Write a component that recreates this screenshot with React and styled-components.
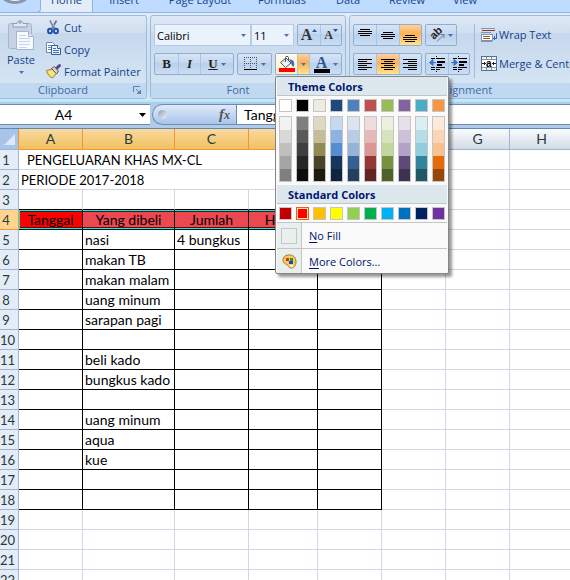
import React from 'react'
import styled, { createGlobalStyle } from 'styled-components';

const GlobalStyle = createGlobalStyle`
*{
    box-sizing:border-box;
}
body{
    margin:0;
    overflow:hidden;
    background:#fff;
}
button, input, select{
    font:inherit;
    color:inherit;
    margin:0;
    padding:0;
    border:0;
    border-radius:0;
    background:none;
    outline:0;
}
`;

const tabs = [
    { name: 'Home', width: 52, active: true },
    { name: 'Insert', width: 62 },
    { name: 'Page Layout', width: 90 },
    { name: 'Formulas', width: 74 },
    { name: 'Data', width: 58 },
    { name: 'Review', width: 60 },
    { name: 'View', width: 56 },
];

const themeColors = [
    { base: '#ffffff', shades: ['#f2f2f2', '#d8d8d8', '#bfbfbf', '#a5a5a5', '#7f7f7f'] },
    { base: '#000000', shades: ['#7f7f7f', '#595959', '#3f3f3f', '#262626', '#0c0c0c'] },
    { base: '#eeece1', shades: ['#ddd9c3', '#c4bd97', '#938953', '#494429', '#1d1b10'] },
    { base: '#1f497d', shades: ['#c6d9f0', '#8db3e2', '#548dd4', '#17365d', '#0f243e'] },
    { base: '#4f81bd', shades: ['#dbe5f1', '#b8cce4', '#95b3d7', '#366092', '#244061'] },
    { base: '#c0504d', shades: ['#f2dcdb', '#e5b9b7', '#d99694', '#953734', '#632423'] },
    { base: '#9bbb59', shades: ['#ebf1dd', '#d7e3bc', '#c3d69b', '#76923c', '#4f6128'] },
    { base: '#8064a2', shades: ['#e5e0ec', '#ccc1d9', '#b2a2c7', '#5f497a', '#3f3151'] },
    { base: '#4bacc6', shades: ['#dbeef3', '#b7dde8', '#92cddc', '#31859b', '#205867'] },
    { base: '#f79646', shades: ['#fdeada', '#fbd5b5', '#fac08f', '#e36c09', '#974806'] },
];

const standardColors = ['#c00000', '#ff0000', '#ffc000', '#ffff00', '#92d050', '#00b050', '#00b0f0', '#0070c0', '#002060', '#7030a0'];

const columns = [
    { name: 'A', width: 64, selected: true },
    { name: 'B', width: 92, selected: true },
    { name: 'C', width: 74, selected: true },
    { name: 'D', width: 69, selected: true },
    { name: 'E', width: 64, selected: true },
    { name: 'F', width: 64 },
    { name: 'G', width: 64 },
    { name: 'H', width: 64 },
    { name: 'I', width: 64 },
    { name: 'J', width: 64 },
];

const headings = ['Tanggal', 'Yang dibeli', 'Jumlah', 'Harga', 'Total'];

const items = {
    5: ['', 'nasi', '4 bungkus'],
    6: ['', 'makan TB'],
    7: ['', 'makan malam'],
    8: ['', 'uang minum'],
    9: ['', 'sarapan pagi'],
    11: ['', 'beli kado'],
    12: ['', 'bungkus kado'],
    14: ['', 'uang minum'],
    15: ['', 'aqua'],
    16: ['', 'kue'],
};

const Arrow = () => (
    <svg width='5' height='3' viewBox='0 0 5 3'><path d='M0 0h5L2.5 3z' fill='#4a73ad' /></svg>
);

const PasteIcon = () => (
    <svg width='28' height='32' viewBox='0 0 28 32'>
        <rect x='1.5' y='4.500' width='23' height='25' rx='2' fill='#c6d3e6' stroke='#a6b6ce' />
        <path d='M6 8V4.500h4C10 1 16 1 16 4.500h4V8z' fill='#e3e7ee' stroke='#8f9db3' />
        <circle cx='13' cy='3.500' r='1.200' fill='#8f9db3' />
        <path d='M9.500 12.500h12l5 5v13h-17z' fill='#f6f9fe' stroke='#a3b5d0' />
        <path d='M21.500 12.500v5h5' fill='#dbe5f3' stroke='#a3b5d0' />
        <path d='M12 16.500h7M12 19.500h11M12 22.500h11M12 25.500h11M12 28.500h8' stroke='#c9d6e9' />
    </svg>
);

const CutIcon = () => (
    <svg width='16' height='16' viewBox='0 0 16 16'>
        <path d='M4 1.500l4.500 8M10.500 1.500l-4.500 8' stroke='#6b7b93' strokeWidth='1.800' fill='none' />
        <path d='M5 2l3.500 6' stroke='#dbe3ee' strokeWidth='.7' />
        <ellipse cx='4' cy='12' rx='2' ry='2.300' fill='none' stroke='#1f4fb5' strokeWidth='1.900' />
        <ellipse cx='10' cy='12' rx='2' ry='2.300' fill='none' stroke='#1f4fb5' strokeWidth='1.900' />
    </svg>
);

const CopyIcon = () => (
    <svg width='16' height='16' viewBox='0 0 16 16'>
        <path d='M.5 1.500h6l3 3v7h-9z' fill='#fff' stroke='#7286a8' />
        <path d='M2 4.500h4M2 6.500h5M2 8.500h5' stroke='#5d86cc' />
        <path d='M5.500 4.500h6l3 3v6h-9z' fill='#e8f0fc' stroke='#3f5a91' />
        <path d='M11.500 4.500v3h3' fill='#fff' stroke='#3f5a91' />
        <path d='M7 7.500h3M7 9.500h6M7 11.500h6' stroke='#3d70c8' />
    </svg>
);

const PainterIcon = () => (
    <svg width='16' height='16' viewBox='0 0 16 16'>
        <path d='M.5 7.500l6-1.500 4 4.500-4 4.500c-3-1-5-3.500-6-7.500z' fill='#f6d965' stroke='#a38532' />
        <path d='M3 8.500l4 4M5 7.500l3.500 3.500' stroke='#fff4bd' />
        <path d='M5.500 5.500l3-2 4 4.500-2 3z' fill='#d5d2c8' stroke='#5d5d6b' />
        <path d='M11 5l2.500-2.500' stroke='#5b4790' strokeWidth='3' strokeLinecap='round' />
    </svg>
);

// letter with a small triangle for grow / shrink font
const GrowIcon = ({ small }) => (
    <LetterIcon $size={small ? 12 : 16}>
        A
        <svg width='5' height='3' viewBox='0 0 5 3'>
            <path d={small ? 'M0 0h5L2.5 3z' : 'M0 3h5L2.500 0z'} fill='#2d5594' />
        </svg>
    </LetterIcon>
);

const BordersIcon = () => (
    <svg width='14' height='14' viewBox='0 0 14 14' shapeRendering='crispEdges'>
        <path d='M0 .5h13M0 6.500h13' stroke='#555' strokeDasharray='1 1' />
        <path d='M.5 0v12M6.500 0v12M12.500 0v12' stroke='#555' strokeDasharray='1 1' />
        <path d='M0 12.500h13' stroke='#000' />
    </svg>
);

const BucketIcon = () => (
    <svg width='18' height='16' viewBox='0 0 18 16'>
        <path d='M2.500 6.500l5.500-4.500 5 5-5.500 4.500z' fill='#f2f4f8' stroke='#44536e' />
        <path d='M4.500 7l3.500-3 3.500 3' fill='none' stroke='#c1cbdb' />
        <path d='M7.500 6V1.500c0-1.500 3-1.500 3 0V5' fill='none' stroke='#44536e' />
        <path d='M11 3.500c4-.5 6 2 5 7-2 .5-2.500-2-3-4z' fill='#3e6dc0' />
        <rect y='12' x='1' width='16' height='4' fill='#ff0000' />
    </svg>
);

const FontColorIcon = () => (
    <FontColorStyled>
        <span>A</span>
        <i />
    </FontColorStyled>
);

const LinesIcon = ({ lines }) => (
    <svg width='15' height='13' viewBox='0 0 15 13' shapeRendering='crispEdges'>
        {lines.map(([x, y, w]) => <rect key={y} x={x} y={y} width={w} height='1' fill='#000' />)}
    </svg>
);

const topLines = [[2, 0, 10], [0, 2, 14], [0, 4, 14], [2, 6, 10]];
const middleLines = topLines.map(([x, y, w]) => [x, y + 3, w]);
const bottomLines = topLines.map(([x, y, w]) => [x, y + 6, w]);
const leftLines = [[0, 1, 14], [0, 3, 9], [0, 5, 14], [0, 7, 9], [0, 9, 14], [0, 11, 9]];
const centerLines = leftLines.map(([, y, w]) => [w === 9 ? 3 : 0, y, w]);
const rightLines = leftLines.map(([, y, w]) => [14 - w, y, w]);

const AngleIcon = () => (
    <svg width='16' height='14' viewBox='0 0 16 14'>
        <text x='0' y='0' transform='translate(5 12) rotate(-45)' fontFamily='Liberation Sans' fontWeight='bold' fontSize='11' fill='#222'>ab</text>
        <path d='M8 13.500L15 6.500M11.500 6.500H15v3.500' fill='none' stroke='#7a7f88' />
    </svg>
);

const IndentIcon = ({ right }) => (
    <svg width='17' height='16' viewBox='0 0 17 16'>
        <path d={right ? 'M0 6.500h5M3 3.500l3.500 3L3 9.500z' : 'M2 6.500h5M4 3.500L.5 6.500l3.500 3z'} fill='#3a6fd0' stroke='#3a6fd0' />
        <g shapeRendering='crispEdges' fill='#000'>
            <rect x='7' y='0' width='1' height='1' />
            <rect x='2' y='2' width='4' height='1' />
            <rect x='7' y='2' width='9' height='1' />
            <rect x='8' y='5' width='8' height='2' />
            <rect x='8' y='8' width='5' height='2' />
            <rect x='2' y='11' width='4' height='1' />
            <rect x='7' y='11' width='9' height='1' />
            <rect x='2' y='13' width='4' height='1' />
            <rect x='7' y='13' width='4' height='1' />
            <rect x='7' y='15' width='1' height='1' />
        </g>
    </svg>
);

const WrapIcon = () => (
    <svg width='16' height='16' viewBox='0 0 16 16' shapeRendering='crispEdges'>
        <path d='M0 1.500h14M0 5.500h10M0 9.500h10M0 14.500h11' stroke='#7d93b5' />
        <path d='M1 3.500h13' stroke='#8a3f14' strokeWidth='1' />
        <rect x='0' y='7' width='11' height='6' fill='#fff' stroke='#7d93b5' />
        <path d='M2 9.500h7M2 11.500h7' stroke='#a5541f' />
        <path d='M15.500 6v5H12M13.500 9v4' stroke='#3a66a8' fill='none' />
    </svg>
);

const MergeIcon = () => (
    <svg width='16' height='16' viewBox='0 0 16 16' shapeRendering='crispEdges'>
        <rect x='.5' y='.5' width='15' height='14' fill='#eef3fa' stroke='#5b6f8f' />
        <path d='M5.500 1v3M10.500 1v3M5.500 11v3M10.500 11v3M1 3.500h14M1 11.500h14' stroke='#7f93b2' />
        <rect x='1' y='4' width='14' height='7' fill='#fff' />
        <path d='M1 7.500h4M3.500 6v3M11 7.500h4M12.500 6v3' stroke='#222' />
        <text x='5' y='11' fontFamily='Liberation Sans' fontWeight='bold' fontSize='10' fill='#000'>a</text>
    </svg>
);

const LauncherIcon = () => (
    <svg width='9' height='9' viewBox='0 0 9 9'>
        <path d='M.5 6V.5H7' fill='none' stroke='#5f7fae' />
        <path d='M3 3l4 4' stroke='#5f7fae' />
        <path d='M8 3.500V8H3.500z' fill='#5f7fae' />
    </svg>
);

const PaletteIcon = () => (
    <svg width='15' height='15' viewBox='0 0 15 15'>
        <path d='M6 1c5-.5 8 2 8 7 0 4-2.500 6-5 6-2 0-2-1.500-3-2.500C4 9.500 1 10 1 6c0-3 2-4.700 5-5z' fill='#f3cf62' stroke='#a77b22' />
        <rect x='4' y='4' width='3' height='3' fill='#d22d1f' />
        <rect x='8' y='4' width='3' height='3' fill='#2f9a35' />
        <rect x='7' y='7' width='4' height='3' fill='#2146b8' />
        <circle cx='9.500' cy='12' r='1.300' fill='#fff' />
    </svg>
);

const ColorPicker = () => {
    return (
        <PickerStyled>
            <PickerTitle>Theme Colors</PickerTitle>
            <SwatchRow>
                {themeColors.map(({ base }) => <Swatch key={base} $color={base} aria-label={base} />)}
            </SwatchRow>
            <SwatchRow $shades>
                {themeColors.map(({ base, shades }) => (
                    <ShadeColumn key={base}>
                        {shades.map(shade => <Shade key={shade} $color={shade} aria-label={shade} />)}
                    </ShadeColumn>
                ))}
            </SwatchRow>
            <PickerTitle>Standard Colors</PickerTitle>
            <SwatchRow $standard>
                {standardColors.map(color => (
                    <Swatch key={color} $color={color} $selected={color === '#ff0000'} aria-label={color} />
                ))}
            </SwatchRow>
            <PickerItem>
                <span className='icon'><i className='empty' /></span>
                <span><u>N</u>o Fill</span>
            </PickerItem>
            <PickerItem>
                <span className='icon'><PaletteIcon /></span>
                <span><u>M</u>ore Colors...</span>
            </PickerItem>
        </PickerStyled>
    )
}

const Ribbon = () => {
    return (
        <RibbonStyled>
            <Group $width={147} $first>
                <div className='body clipboard'>
                    <PasteButton>
                        <PasteIcon />
                        <span>Paste</span>
                        <Arrow />
                    </PasteButton>
                    <div>
                        <TextButton><CutIcon />Cut</TextButton>
                        <TextButton><CopyIcon />Copy</TextButton>
                        <TextButton><PainterIcon />Format Painter</TextButton>
                    </div>
                </div>
                <GroupLabel>
                    <span>Clipboard</span>
                    <button aria-label='Clipboard options'><LauncherIcon /></button>
                </GroupLabel>
            </Group>
            <Group $width={196}>
                <div className='body'>
                    <ToolRow>
                        <Combos>
                            <Combo $width={97}>
                                <select aria-label='Font name'><option>Calibri</option></select>
                                <Arrow />
                            </Combo>
                            <Combo $width={43}>
                                <select aria-label='Font size'><option>11</option></select>
                                <Arrow />
                            </Combo>
                        </Combos>
                        <ButtonGroup>
                            <ToolButton $width={22} aria-label='Grow font'><GrowIcon /></ToolButton>
                            <ToolButton $width={21} aria-label='Shrink font'><GrowIcon small /></ToolButton>
                        </ButtonGroup>
                    </ToolRow>
                    <ToolRow>
                        <ButtonGroup>
                            <ToolButton $width={23}><Letter>B</Letter></ToolButton>
                            <ToolButton $width={22}><Letter $italic>I</Letter></ToolButton>
                            <ToolButton $width={33}><Letter $underline>U</Letter><Arrow /></ToolButton>
                        </ButtonGroup>
                        <ButtonGroup>
                            <ToolButton $width={33} aria-label='Borders'><BordersIcon /><Arrow /></ToolButton>
                        </ButtonGroup>
                        <ButtonGroup>
                            <ToolButton $width={21} $warm aria-label='Fill color'><BucketIcon /></ToolButton>
                            <ToolButton $width={12} $active aria-label='Fill color menu'><Arrow /></ToolButton>
                            <ToolButton $width={32} aria-label='Font color'><FontColorIcon /><Arrow /></ToolButton>
                            <ColorPicker />
                        </ButtonGroup>
                    </ToolRow>
                </div>
                <GroupLabel>
                    <span>Font</span>
                    <button aria-label='Font options'><LauncherIcon /></button>
                </GroupLabel>
            </Group>
            <Group $width={234}>
                <div className='body split'>
                    <div>
                        <ToolRow>
                            <ButtonGroup>
                                <ToolButton $width={22} aria-label='Top align'><LinesIcon lines={topLines} /></ToolButton>
                                <ToolButton $width={23} aria-label='Middle align'><LinesIcon lines={middleLines} /></ToolButton>
                                <ToolButton $width={22} $active aria-label='Bottom align'><LinesIcon lines={bottomLines} /></ToolButton>
                            </ButtonGroup>
                            <ButtonGroup>
                                <ToolButton $width={30} aria-label='Orientation'><AngleIcon /><Arrow /></ToolButton>
                            </ButtonGroup>
                        </ToolRow>
                        <ToolRow>
                            <ButtonGroup>
                                <ToolButton $width={22} aria-label='Align left'><LinesIcon lines={leftLines} /></ToolButton>
                                <ToolButton $width={23} $active aria-label='Center'><LinesIcon lines={centerLines} /></ToolButton>
                                <ToolButton $width={22} aria-label='Align right'><LinesIcon lines={rightLines} /></ToolButton>
                            </ButtonGroup>
                            <ButtonGroup>
                                <ToolButton $width={22} aria-label='Decrease indent'><IndentIcon /></ToolButton>
                                <ToolButton $width={21} aria-label='Increase indent'><IndentIcon right /></ToolButton>
                            </ButtonGroup>
                        </ToolRow>
                    </div>
                    <WideButtons>
                        <TextButton><WrapIcon />Wrap Text</TextButton>
                        <TextButton><MergeIcon />Merge &amp; Center</TextButton>
                    </WideButtons>
                </div>
                <GroupLabel><span>Alignment</span></GroupLabel>
            </Group>
        </RibbonStyled>
    )
}

const Sheet = () => {
    const rows = Array.from({ length: 30 }, (_, i) => i + 1);

    const renderCells = (row) => {
        if (row < 3) {
            return (
                <>
                    <TitleCell colSpan={5} $indent={row === 1}>{row === 1 ? 'PENGELUARAN KHAS MX-CL' : 'PERIODE 2017-2018'}</TitleCell>
                    {columns.slice(5).map(({ name }) => <Cell key={name} />)}
                </>
            )
        }
        return columns.map(({ name }, i) => {
            const inTable = i < 5 && row > 3 && row < 19;
            if (row === 4 && inTable) {
                return <HeadingCell key={name} $first={i === 0} $last={i === 4}>{headings[i]}</HeadingCell>
            }
            return (
                <Cell key={name} $ruled={inTable} $ruledBottom={i < 5 && row === 3}>
                    {items[row] && items[row][i]}
                </Cell>
            )
        });
    };

    return (
        <SheetStyled>
            <colgroup>
                <col style={{ width: 19 }} />
                {columns.map(({ name, width }) => <col key={name} style={{ width }} />)}
            </colgroup>
            <thead>
                <tr>
                    <Corner aria-label='Select all'>
                        <svg width='11' height='11' viewBox='0 0 11 11'><path d='M11 0v11H0z' fill='#dde8f8' /></svg>
                    </Corner>
                    {columns.map(({ name, selected }) => <ColumnHead key={name} $selected={selected}>{name}</ColumnHead>)}
                </tr>
            </thead>
            <tbody>
                {rows.map(row => (
                    <tr key={row}>
                        <RowHead $selected={row === 4}>{row}</RowHead>
                        {renderCells(row)}
                    </tr>
                ))}
            </tbody>
        </SheetStyled>
    )
}

const App = () => {
    return (
        <AppStyled>
            <GlobalStyle />
            <TabBar>
                <svg width='41' height='12' viewBox='0 0 41 12'>
                    <rect width='40' height='12' fill='#bfdbff' />
                    <ellipse cx='15' cy='-9' rx='16' ry='13' fill='#8796ad' />
                    <ellipse cx='15' cy='-10' rx='13' ry='11' fill='#f4f4f4' />
                    <path d='M40.500 0v9q0 3-3 3' fill='none' stroke='#8db2e3' />
                </svg>
                {tabs.map(({ name, width, active }) => <Tab key={name} $width={width} $active={active}>{name}</Tab>)}
            </TabBar>
            <Ribbon />
            <FormulaBar>
                <NameBox>
                    <input aria-label='Name box' defaultValue='A4' />
                    <svg width='7' height='4' viewBox='0 0 7 4'><path d='M0 0h7L3.500 4z' fill='#000' /></svg>
                </NameBox>
                <FxBox>
                    <i />
                    <button aria-label='Insert function'>f<small>x</small></button>
                </FxBox>
                <input className='formula' aria-label='Formula' defaultValue='Tanggal' />
            </FormulaBar>
            <Sheet />
        </AppStyled>
    )
}

const AppStyled = styled.div`
    height:100vh;
    overflow:hidden;
    font-family:'Open Sans', 'Noto Sans', sans-serif;
    font-size:11px;
    color:#15428b;
    background:#fff;
`;

const TabBar = styled.div`
    display:flex;
    align-items:flex-end;
    height:12px;
    overflow:hidden;
    background:#bfdbff;
`;

const Tab = styled.button`
    flex:none;
    width:${({ $width }) => $width}px;
    height:22px;
    padding-bottom:2px;
    line-height:20px;
    background:${({ $active }) => $active ? '#e3edf9' : 'none'};
    border-right:${({ $active }) => $active ? '1px solid #8db2e3' : '0'};
`;

const RibbonStyled = styled.div`
    display:flex;
    gap:3px;
    height:90px;
    padding:2px 0 3px;
    border-top:1px solid #8db2e3;
    background:linear-gradient(#e3edf9, #d3e2f3 20%, #cbdcf0 84%, #d9e8f7);
    box-shadow:inset 0 -2px #b4ecf8;
`;

const Group = styled.div`
    flex:none;
    display:flex;
    flex-direction:column;
    width:${({ $width }) => $width}px;
    border:1px solid #9ebbdc;
    border-left-width:${({ $first }) => $first ? 0 : 1}px;
    border-radius:${({ $first }) => $first ? '0 3px 3px 0' : '3px'};
    background:linear-gradient(#dee8f5, #d1dff0 20%, #c7d8ed 21%, #d8e8f5);
    .body{
        flex:1;
        padding:8px 3px 0;
    }
    .clipboard{
        display:flex;
        padding:0;
    }
    .split{
        display:flex;
    }
`;

const GroupLabel = styled.div`
    display:flex;
    height:15px;
    background:#c1d8f1;
    color:#3e6aaa;
    line-height:14px;
    span{
        flex:1;
        text-align:center;
    }
    button{
        display:flex;
        align-items:center;
        width:20px;
        padding-left:7px;
    }
`;

const PasteButton = styled.button`
    display:flex;
    flex-direction:column;
    align-items:center;
    width:42px;
    padding-top:3px;
    span{
        line-height:18px;
        padding-bottom:2px;
    }
`;

const TextButton = styled.button`
    display:flex;
    align-items:center;
    gap:2px;
    height:22px;
    padding-left:4px;
    white-space:nowrap;
`;

const ToolRow = styled.div`
    display:flex;
    gap:3px;
    height:29px;
`;

const ButtonGroup = styled.div`
    position:relative;
    display:flex;
    height:22px;
    border:1px solid #8eaed6;
    border-radius:2px;
    background:linear-gradient(#d6e4f5, #c5d8ef 45%, #b9d0ec 46%, #cbddf2);
`;

const ToolButton = styled.button`
    display:flex;
    align-items:center;
    justify-content:center;
    gap:3px;
    width:${({ $width }) => $width}px;
    background:${({ $active, $warm }) => $active
        ? 'linear-gradient(#fbd3a1, #fdb257 40%, #fdb55b 50%, #ffe58d)'
        : $warm ? 'linear-gradient(#fffaea, #fff0c4)' : 'none'};
    svg{
        flex:none;
    }
    & + &{
        border-left:1px solid #aac4e4;
    }
`;

const Combos = styled.div`
    display:flex;
`;

const Combo = styled.div`
    display:flex;
    align-items:center;
    width:${({ $width }) => $width}px;
    height:22px;
    padding-right:4px;
    border:1px solid #b3cae8;
    background:#eaf2fb;
    select{
        flex:1;
        width:0;
        height:20px;
        padding-left:2px;
        appearance:none;
        color:#000;
    }
`;

const Letter = styled.span`
    font-family:'Liberation Serif', serif;
    font-size:13px;
    color:#222;
    font-weight:bold;
    font-style:${({ $italic }) => $italic ? 'italic' : 'normal'};
    text-decoration:${({ $underline }) => $underline ? 'underline' : 'none'};
`;

const LetterIcon = styled.span`
    display:flex;
    align-items:baseline;
    font-family:'Liberation Serif', serif;
    font-weight:bold;
    font-size:${({ $size }) => $size}px;
    line-height:20px;
    color:#333;
    svg{
        align-self:flex-start;
        margin-top:4px;
    }
`;

const FontColorStyled = styled.span`
    display:flex;
    flex-direction:column;
    align-items:center;
    width:16px;
    font-family:'Liberation Serif', serif;
    font-weight:bold;
    font-size:16px;
    line-height:13px;
    color:#2d5594;
    i{
        width:16px;
        height:4px;
        background:#000;
    }
`;

const WideButtons = styled.div`
    margin-left:4px;
    padding-left:2px;
    border-left:1px solid #9ebbdc;
    height:54px;
    ${TextButton}{
        height:29px;
        padding-bottom:8px;
    }
`;

const PickerStyled = styled.div`
    position:absolute;
    z-index:2;
    top:22px;
    left:-1px;
    width:174px;
    padding:0 1px;
    border:1px solid #868686;
    border-radius:2px;
    background:#fafafa;
    color:#00156e;
    box-shadow:3px 3px 3px rgba(0, 0, 0, .4);
`;

const PickerTitle = styled.div`
    height:19px;
    padding-left:11px;
    border-bottom:1px solid #c5c5c5;
    background:#dde7ee;
    font-weight:bold;
    line-height:20px;
`;

const SwatchRow = styled.div`
    display:flex;
    gap:4px;
    padding:${({ $shades, $standard }) => $shades ? '4px 2px 3px' : $standard ? '3px 2px 2px' : '3px 2px 0'};
    border-bottom:${({ $standard }) => $standard ? '1px solid #c5c5c5' : '0'};
`;

const Swatch = styled.button`
    width:13px;
    height:13px;
    border:1px solid ${({ $selected }) => $selected ? '#f15a22' : '#c5c5c5'};
    background:${({ $color }) => $color};
    box-shadow:${({ $selected }) => $selected ? 'inset 0 0 0 1px #ffe294' : 'none'};
`;

const ShadeColumn = styled.div`
    display:flex;
    flex-direction:column;
    width:13px;
    border:1px solid #c5c5c5;
`;

const Shade = styled.button`
    height:13px;
    background:${({ $color }) => $color};
    &:last-child{
        height:12px;
    }
`;

const PickerItem = styled.button`
    display:flex;
    align-items:center;
    gap:7px;
    width:100%;
    height:25px;
    & + &{
        border-top:1px solid #c5c5c5;
    }
    .icon{
        display:flex;
        align-items:center;
        justify-content:center;
        width:25px;
        height:100%;
        border-right:1px solid #c5c5c5;
        background:#e9eeee;
    }
    .empty{
        width:16px;
        height:16px;
        border:1px solid #c5c5c5;
    }
    u{
        text-underline-offset:2px;
    }
`;

const FormulaBar = styled.div`
    display:flex;
    height:27px;
    padding:2px 0 3px;
    border-bottom:1px solid #5f86b5;
    background:#b3cbe8;
    color:#000;
    font-family:Lato, sans-serif;
    font-size:14px;
    .formula{
        flex:1;
        min-width:0;
        padding-left:7px;
        border:1px solid #6b8cb5;
        border-right:0;
        background:#fff;
    }
`;

const NameBox = styled.div`
    display:flex;
    align-items:center;
    width:150px;
    padding-right:4px;
    border:1px solid #6b8cb5;
    border-width:1px 0;
    background:#fff;
    input{
        flex:1;
        width:0;
        padding-right:12px;
        text-align:center;
    }
`;

const FxBox = styled.div`
    display:flex;
    align-items:center;
    justify-content:space-between;
    width:84px;
    margin-left:2px;
    padding:0 6px 0 5px;
    border:1px solid #6b8cb5;
    border-right:0;
    border-radius:11px 0 0 11px;
    background:linear-gradient(#dfeafa, #a9c5ea);
    i{
        width:9px;
        height:9px;
        border-radius:50%;
        background:linear-gradient(135deg, #8f9fb5, #eef1f5);
    }
    button{
        font-family:'Liberation Serif', serif;
        font-style:italic;
        font-weight:bold;
        font-size:15px;
        color:#555;
    }
    small{
        font-size:12px;
    }
`;

const SheetStyled = styled.table`
    width:100%;
    min-width:702px;
    table-layout:fixed;
    border-collapse:separate;
    border-spacing:0;
    font-family:Lato, sans-serif;
    font-size:14px;
    line-height:18px;
    color:#000;
    th, td{
        height:20px;
    }
    thead th{
        height:21px;
    }
`;

const Corner = styled.th`
    padding:0 3px 0 0;
    border-right:1px solid #f29536;
    border-bottom:1px solid #9eb6ce;
    background:#a9c4e9;
    vertical-align:middle;
    svg{
        display:block;
        margin-left:auto;
    }
`;

const ColumnHead = styled.th`
    padding:0;
    border-right:1px solid ${({ $selected }) => $selected ? '#f29536' : '#9eb6ce'};
    border-bottom:1px solid ${({ $selected }) => $selected ? '#f29536' : '#9eb6ce'};
    background:${({ $selected }) => $selected
        ? 'linear-gradient(#f9d99f, #f1c15f)'
        : 'linear-gradient(#f9fcfd, #d3dbe9)'};
    font-weight:normal;
    color:#273a3a;
`;

const RowHead = styled.th`
    padding:1px 6px 0 0;
    border-right:1px solid ${({ $selected }) => $selected ? '#f29536' : '#9eb6ce'};
    border-bottom:1px solid ${({ $selected }) => $selected ? '#f29536' : '#9eb6ce'};
    background:${({ $selected }) => $selected ? '#ffd58d' : '#e4ecf7'};
    font-weight:normal;
    font-size:13px;
    color:#273a3a;
`;

const Cell = styled.td`
    padding:1px 0 0 2px;
    border-right:1px solid ${({ $ruled }) => $ruled ? '#000' : '#d0d7e5'};
    border-bottom:1px solid ${({ $ruled, $ruledBottom }) => $ruled || $ruledBottom ? '#000' : '#d0d7e5'};
    white-space:nowrap;
`;

const TitleCell = styled(Cell)`
    padding-left:${({ $indent }) => $indent ? 8 : 2}px;
    font-size:13px;
`;

const HeadingCell = styled.td`
    padding:1px 0 0;
    border-right:1px solid #000;
    border-bottom:1px solid #000;
    background:${({ $first }) => $first ? '#ff0000' : '#ed4850'};
    box-shadow:inset 0 1px #00f0f0, inset 0 -1px #00f0f0${({ $first, $last }) => $first ? ', inset 1px 0 #00f0f0' : $last ? ', inset -1px 0 #00f0f0' : ''}, inset 0 2px #5a1010, inset 0 -2px #5a1010;
    text-align:center;
    white-space:nowrap;
`;

export default App
